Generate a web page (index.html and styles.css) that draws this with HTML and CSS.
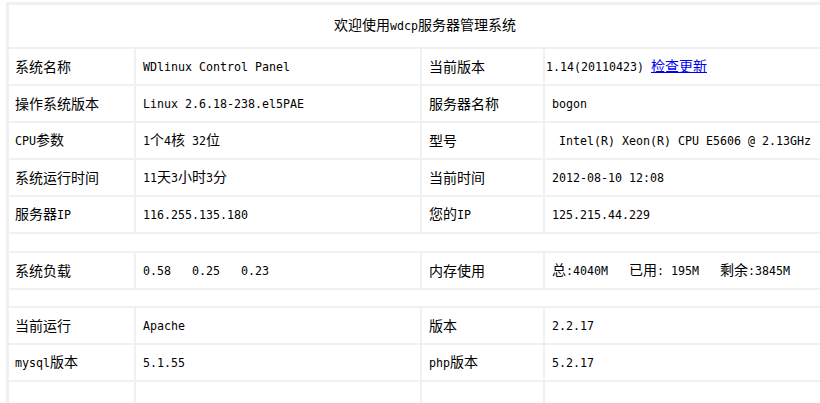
FILE: index.html
```html
<!DOCTYPE html>
<html lang="zh-CN">
<head>
<meta charset="utf-8">
<title>wdcp服务器管理系统</title>
<link rel="stylesheet" href="styles.css">
</head>
<body>
<table class="info">
  <colgroup>
    <col class="c1"><col class="c2"><col class="c3"><col class="c4">
  </colgroup>
  <tr class="title-row"><td colspan="4" class="title">欢迎使用<span class="en">wdcp</span>服务器管理系统</td></tr>
  <tr class="row">
    <td class="label">系统名称</td><td class="val"><span class="en">WDlinux Control Panel</span></td>
    <td class="val">当前版本</td><td class="flush"><span class="en">1.14(20110423) </span><a href="#" class="link">检查更新</a></td>
  </tr>
  <tr class="row">
    <td class="label">操作系统版本</td><td class="val"><span class="en">Linux 2.6.18-238.el5PAE</span></td>
    <td class="val">服务器名称</td><td class="val"><span class="en">bogon</span></td>
  </tr>
  <tr class="row">
    <td class="label"><span class="en">CPU</span>参数</td><td class="val"><span class="en">1</span>个<span class="en">4</span>核<span class="en"> 32</span>位</td>
    <td class="val">型号</td><td class="indent"><span class="en">Intel(R) Xeon(R) CPU E5606 @ 2.13GHz</span></td>
  </tr>
  <tr class="row">
    <td class="label">系统运行时间</td><td class="val"><span class="en">11</span>天<span class="en">3</span>小时<span class="en">3</span>分</td>
    <td class="val">当前时间</td><td class="val"><span class="en">2012-08-10 12:08</span></td>
  </tr>
  <tr class="row">
    <td class="label">服务器<span class="en">IP</span></td><td class="val"><span class="en">116.255.135.180</span></td>
    <td class="val">您的<span class="en">IP</span></td><td class="val"><span class="en">125.215.44.229</span></td>
  </tr>
  <tr class="sep"><td colspan="4"></td></tr>
  <tr class="row">
    <td class="label">系统负载</td><td class="val"><span class="en">0.58&nbsp;&nbsp;&nbsp;0.25&nbsp;&nbsp;&nbsp;0.23</span></td>
    <td class="val">内存使用</td><td class="val">总<span class="en">:4040M&nbsp;&nbsp;&nbsp;</span>已用<span class="en">: 195M&nbsp;&nbsp;&nbsp;</span>剩余<span class="en">:3845M</span></td>
  </tr>
  <tr class="sep sep2"><td colspan="4"></td></tr>
  <tr class="row">
    <td class="label">当前运行</td><td class="val"><span class="en">Apache</span></td>
    <td class="val">版本</td><td class="val"><span class="en">2.2.17</span></td>
  </tr>
  <tr class="row">
    <td class="label"><span class="en">mysql</span>版本</td><td class="val"><span class="en">5.1.55</span></td>
    <td class="val"><span class="en">php</span>版本</td><td class="val"><span class="en">5.2.17</span></td>
  </tr>
  <tr class="row">
    <td class="label"></td><td class="val"></td><td class="val"></td><td class="val"></td>
  </tr>
</table>
</body>
</html>
```
FILE: styles.css
```css
html, body {
  overflow: hidden;
}
body {
  margin: 2px 0 0 6px;
  background: #ffffff;
  color: #000000;
  font-family: "Noto Sans CJK SC", "DejaVu Sans Mono", sans-serif;
  font-size: 14px;
}
.info {
  width: 838px;
  table-layout: fixed;
  border-collapse: separate;
  border-spacing: 2px;
  border: 1px solid #f0f0f0;
  background: #f0f0f0;
}
.c1 { width: 125px; }
.c2 { width: 284px; }
.c3 { width: 121px; }
.c4 { width: 296px; }
.info td {
  background: #ffffff;
  box-sizing: border-box;
  padding: 0 0 2px 7px;
  vertical-align: middle;
  white-space: nowrap;
  line-height: 16px;
}
.info td.label { padding-left: 6px; }
.info td.flush { padding-left: 1px; }
.info td.indent { padding-left: 14px; }
.title-row td { height: 42px; }
.info td.title { text-align: center; padding: 0 0 2px 0; }
.row td { height: 35px; }
.sep td { height: 17px; padding: 0; }
.sep2 td { height: 16px; }
.en {
  font-family: "DejaVu Sans Mono", monospace;
  font-size: 11.63px;
  white-space: pre;
}
.link {
  color: #0000ee;
  text-decoration: underline;
}
```
